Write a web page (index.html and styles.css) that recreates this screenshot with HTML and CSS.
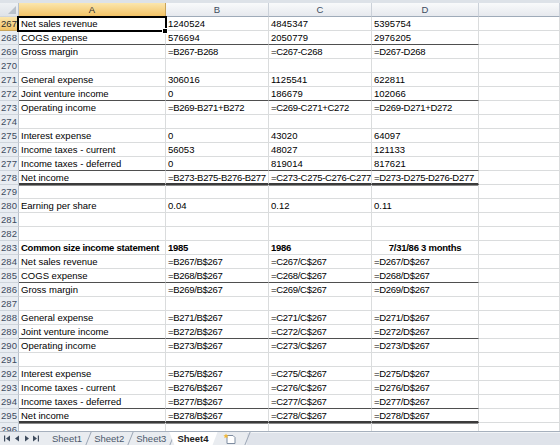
FILE: index.html
```html
<!DOCTYPE html>
<html lang="en">
<head>
    <meta charset="UTF-8">
    <title>Sheet4 - Income statement</title>
    <link rel="stylesheet" href="styles.css">
</head>
<body>
    <div class="topbar"></div>
    <div class="sheet">
        <div class="row hdr">
            <div class="rn corner"></div>
            <div class="col-a sel">A</div>
            <div class="col-b">B</div>
            <div class="col-c">C</div>
            <div class="col-d">D</div>
            <div class="col-e"></div>
        </div>

        <div class="row">
            <div class="rn sel">267</div>
            <div class="col-a selected">Net sales revenue</div>
            <div class="col-b">1240524</div>
            <div class="col-c">4845347</div>
            <div class="col-d">5395754</div>
            <div class="col-e"></div>
        </div>
        <div class="row line">
            <div class="rn">268</div>
            <div class="col-a">COGS expense</div>
            <div class="col-b">576694</div>
            <div class="col-c">2050779</div>
            <div class="col-d">2976205</div>
            <div class="col-e"></div>
        </div>
        <div class="row fx">
            <div class="rn">269</div>
            <div class="col-a">Gross margin</div>
            <div class="col-b">=B267-B268</div>
            <div class="col-c">=C267-C268</div>
            <div class="col-d">=D267-D268</div>
            <div class="col-e"></div>
        </div>
        <div class="row">
            <div class="rn">270</div>
            <div class="col-a"></div><div class="col-b"></div><div class="col-c"></div><div class="col-d"></div><div class="col-e"></div>
        </div>
        <div class="row">
            <div class="rn">271</div>
            <div class="col-a">General expense</div>
            <div class="col-b">306016</div>
            <div class="col-c">1125541</div>
            <div class="col-d">622811</div>
            <div class="col-e"></div>
        </div>
        <div class="row line">
            <div class="rn">272</div>
            <div class="col-a">Joint venture income</div>
            <div class="col-b">0</div>
            <div class="col-c">186679</div>
            <div class="col-d">102066</div>
            <div class="col-e"></div>
        </div>
        <div class="row fx">
            <div class="rn">273</div>
            <div class="col-a">Operating income</div>
            <div class="col-b">=B269-B271+B272</div>
            <div class="col-c">=C269-C271+C272</div>
            <div class="col-d">=D269-D271+D272</div>
            <div class="col-e"></div>
        </div>
        <div class="row">
            <div class="rn">274</div>
            <div class="col-a"></div><div class="col-b"></div><div class="col-c"></div><div class="col-d"></div><div class="col-e"></div>
        </div>
        <div class="row">
            <div class="rn">275</div>
            <div class="col-a">Interest expense</div>
            <div class="col-b">0</div>
            <div class="col-c">43020</div>
            <div class="col-d">64097</div>
            <div class="col-e"></div>
        </div>
        <div class="row">
            <div class="rn">276</div>
            <div class="col-a">Income taxes - current</div>
            <div class="col-b">56053</div>
            <div class="col-c">48027</div>
            <div class="col-d">121133</div>
            <div class="col-e"></div>
        </div>
        <div class="row line">
            <div class="rn">277</div>
            <div class="col-a">Income taxes - deferred</div>
            <div class="col-b">0</div>
            <div class="col-c">819014</div>
            <div class="col-d">817621</div>
            <div class="col-e"></div>
        </div>
        <div class="row thick fx">
            <div class="rn">278</div>
            <div class="col-a">Net income</div>
            <div class="col-b">=B273-B275-B276-B277</div>
            <div class="col-c">=C273-C275-C276-C277</div>
            <div class="col-d">=D273-D275-D276-D277</div>
            <div class="col-e"></div>
        </div>
        <div class="row after-thick">
            <div class="rn">279</div>
            <div class="col-a"></div><div class="col-b"></div><div class="col-c"></div><div class="col-d"></div><div class="col-e"></div>
        </div>
        <div class="row">
            <div class="rn">280</div>
            <div class="col-a">Earning per share</div>
            <div class="col-b">0.04</div>
            <div class="col-c">0.12</div>
            <div class="col-d">0.11</div>
            <div class="col-e"></div>
        </div>
        <div class="row">
            <div class="rn">281</div>
            <div class="col-a"></div><div class="col-b"></div><div class="col-c"></div><div class="col-d"></div><div class="col-e"></div>
        </div>
        <div class="row">
            <div class="rn">282</div>
            <div class="col-a"></div><div class="col-b"></div><div class="col-c"></div><div class="col-d"></div><div class="col-e"></div>
        </div>
        <div class="row bold">
            <div class="rn">283</div>
            <div class="col-a">Common size income statement</div>
            <div class="col-b">1985</div>
            <div class="col-c">1986</div>
            <div class="col-d center">7/31/86 3 months</div>
            <div class="col-e"></div>
        </div>
        <div class="row fx">
            <div class="rn">284</div>
            <div class="col-a">Net sales revenue</div>
            <div class="col-b">=B267/B$267</div>
            <div class="col-c">=C267/C$267</div>
            <div class="col-d">=D267/D$267</div>
            <div class="col-e"></div>
        </div>
        <div class="row line fx">
            <div class="rn">285</div>
            <div class="col-a">COGS expense</div>
            <div class="col-b">=B268/B$267</div>
            <div class="col-c">=C268/C$267</div>
            <div class="col-d">=D268/D$267</div>
            <div class="col-e"></div>
        </div>
        <div class="row fx">
            <div class="rn">286</div>
            <div class="col-a">Gross margin</div>
            <div class="col-b">=B269/B$267</div>
            <div class="col-c">=C269/C$267</div>
            <div class="col-d">=D269/D$267</div>
            <div class="col-e"></div>
        </div>
        <div class="row">
            <div class="rn">287</div>
            <div class="col-a"></div><div class="col-b"></div><div class="col-c"></div><div class="col-d"></div><div class="col-e"></div>
        </div>
        <div class="row fx">
            <div class="rn">288</div>
            <div class="col-a">General expense</div>
            <div class="col-b">=B271/B$267</div>
            <div class="col-c">=C271/C$267</div>
            <div class="col-d">=D271/D$267</div>
            <div class="col-e"></div>
        </div>
        <div class="row line fx">
            <div class="rn">289</div>
            <div class="col-a">Joint venture income</div>
            <div class="col-b">=B272/B$267</div>
            <div class="col-c">=C272/C$267</div>
            <div class="col-d">=D272/D$267</div>
            <div class="col-e"></div>
        </div>
        <div class="row fx">
            <div class="rn">290</div>
            <div class="col-a">Operating income</div>
            <div class="col-b">=B273/B$267</div>
            <div class="col-c">=C273/C$267</div>
            <div class="col-d">=D273/D$267</div>
            <div class="col-e"></div>
        </div>
        <div class="row">
            <div class="rn">291</div>
            <div class="col-a"></div><div class="col-b"></div><div class="col-c"></div><div class="col-d"></div><div class="col-e"></div>
        </div>
        <div class="row fx">
            <div class="rn">292</div>
            <div class="col-a">Interest expense</div>
            <div class="col-b">=B275/B$267</div>
            <div class="col-c">=C275/C$267</div>
            <div class="col-d">=D275/D$267</div>
            <div class="col-e"></div>
        </div>
        <div class="row fx">
            <div class="rn">293</div>
            <div class="col-a">Income taxes - current</div>
            <div class="col-b">=B276/B$267</div>
            <div class="col-c">=C276/C$267</div>
            <div class="col-d">=D276/D$267</div>
            <div class="col-e"></div>
        </div>
        <div class="row line fx">
            <div class="rn">294</div>
            <div class="col-a">Income taxes - deferred</div>
            <div class="col-b">=B277/B$267</div>
            <div class="col-c">=C277/C$267</div>
            <div class="col-d">=D277/D$267</div>
            <div class="col-e"></div>
        </div>
        <div class="row thick fx">
            <div class="rn">295</div>
            <div class="col-a">Net income</div>
            <div class="col-b">=B278/B$267</div>
            <div class="col-c">=C278/C$267</div>
            <div class="col-d">=D278/D$267</div>
            <div class="col-e"></div>
        </div>
        <div class="row after-thick">
            <div class="rn">296</div>
            <div class="col-a"></div><div class="col-b"></div><div class="col-c"></div><div class="col-d"></div><div class="col-e"></div>
        </div>
    </div>

    <div class="tabbar">
        <div class="nav">
            <svg width="46" height="13" viewBox="0 0 46 13">
                <g fill="#3e4b5d">
                    <rect x="4" y="3.5" width="1.2" height="6"/>
                    <path d="M10 3.5 L6 6.5 L10 9.5 Z"/>
                    <path d="M19 3.5 L15 6.5 L19 9.5 Z"/>
                    <path d="M25 3.5 L29 6.5 L25 9.5 Z"/>
                    <path d="M33 3.5 L37 6.5 L33 9.5 Z"/>
                    <rect x="37.8" y="3.5" width="1.2" height="6"/>
                </g>
            </svg>
        </div>
        <div class="tab">Sheet1</div>
        <div class="tab">Sheet2</div>
        <div class="tab">Sheet3</div>
        <div class="tab active">Sheet4</div>
        <div class="tab add">
            <svg width="14" height="11" viewBox="0 0 14 11">
                <path d="M4 2.5 H10 L12 4.5 V10.5 H4 Z" fill="#fff" stroke="#7f8da1"/>
                <path d="M3 0.5 L3.8 2.2 L5.6 2.3 L4.2 3.4 L4.7 5.2 L3 4.2 L1.3 5.2 L1.8 3.4 L0.4 2.3 L2.2 2.2 Z" fill="#f2b632"/>
            </svg>
        </div>
        <div class="filler"></div>
    </div>
</body>
</html>
```

FILE: styles.css
```css
body {
    margin: 0;
    width: 560px;
    height: 445px;
    overflow: hidden;
    background-color: #fff;
    font-family: "Liberation Sans", Arial, sans-serif;
    font-size: 9.5px;
    color: #000;
}
.topbar {
    height: 3px;
    background-color: #dde2e8;
}
.sheet {
    height: 428px;
    overflow: hidden;
}
.row {
    display: flex;
    height: 14px;
}
.row > div {
    flex: none;
    box-sizing: border-box;
    height: 14px;
    padding: 1px 0 0 2px;
    line-height: 12px;
    border-right: 1px solid #dadcdd;
    border-bottom: 1px solid #dadcdd;
    white-space: nowrap;
    overflow: hidden;
}
.row > .rn {
    width: 19px;
    padding-left: 0;
    text-align: center;
    color: #3d4b5e;
    background-color: #e9edf2;
    border-right-color: #b9c1cb;
    border-bottom-color: #cfd5dc;
}
.col-a { width: 147px; }
.col-b, .col-c { width: 103px; }
.col-d { width: 107px; }
.row > .col-e { flex: 1; }

/* formulas are a bit too wide in this font */
.fx > .col-b, .fx > .col-c, .fx > .col-d {
    letter-spacing: -0.3px;
}

/* column headers */
.hdr > div {
    padding-left: 0;
    text-align: center;
    color: #3d4b5e;
    background: linear-gradient(#f9fafb, #e6e9ee);
    border-right-color: #cbd1d9;
    border-bottom-color: #9fabb9;
}
.row.hdr > .corner {
    position: relative;
    background: linear-gradient(#eef1f4, #dfe3e9);
}
.corner::after {
    content: '';
    position: absolute;
    right: 2px;
    bottom: 2px;
    border-left: 8px solid transparent;
    border-bottom: 8px solid #b8c0ca;
}
.row > .sel {
    color: #2a2a2a;
    background: linear-gradient(#fbe6ad, #f3c366);
    border-right-color: #c9a45a;
    border-bottom-color: #c9a45a;
}

/* selected cell */
.row > .selected {
    position: relative;
    overflow: visible;
}
.selected::after {
    content: '';
    position: absolute;
    left: -2px;
    top: -1px;
    right: -2px;
    bottom: -2px;
    border: 2px solid #000;
}
.selected::before {
    content: '';
    position: absolute;
    z-index: 1;
    right: -3px;
    bottom: -4px;
    width: 4px;
    height: 4px;
    background-color: #000;
    border: 1px solid #fff;
}

/* cell borders */
.line > .col-a, .line > .col-b, .line > .col-c, .line > .col-d {
    border-bottom-color: #4f4f4f;
}
.thick > .col-a, .thick > .col-b, .thick > .col-c, .thick > .col-d {
    border-bottom: 2px solid #3b3b3b;
}
.after-thick > .col-a, .after-thick > .col-b, .after-thick > .col-c, .after-thick > .col-d {
    box-shadow: inset 0 1px 0 #8a8a8a;
}

.bold > div:not(.rn) {
    font-weight: bold;
    letter-spacing: -0.25px;
}
.row > .center {
    text-align: center;
    padding-left: 0;
}

/* sheet tabs */
.tabbar {
    display: flex;
    box-sizing: border-box;
    height: 14px;
    border-top: 1px solid #a6b0bd;
    background-color: #e9ecf0;
    color: #4b586a;
    line-height: 13px;
}
.nav {
    width: 46px;
    flex: none;
}
.nav svg {
    display: block;
}
.tab {
    position: relative;
    flex: none;
    padding: 0 6px;
    white-space: nowrap;
}
.tab::after {
    content: '';
    position: absolute;
    right: -1px;
    top: 0;
    width: 1px;
    height: 100%;
    background-color: #9aa5b4;
    transform: skewX(-22deg);
}
.tab.active {
    margin-left: -3px;
    padding: 0 9px 0 8px;
    color: #1e1e1e;
    font-weight: bold;
    background-color: #fff;
    clip-path: polygon(0 0, 100% 0, calc(100% - 5px) 100%, 5px 100%);
}
.tab.active::after {
    display: none;
}
.tab.add {
    padding: 1px 10px 0 5px;
}
.tab.add svg {
    display: block;
}
.filler {
    flex: 1;
    background-color: #dfe3ea;
    border-top: 1px solid #f2f4f7;
}
```
